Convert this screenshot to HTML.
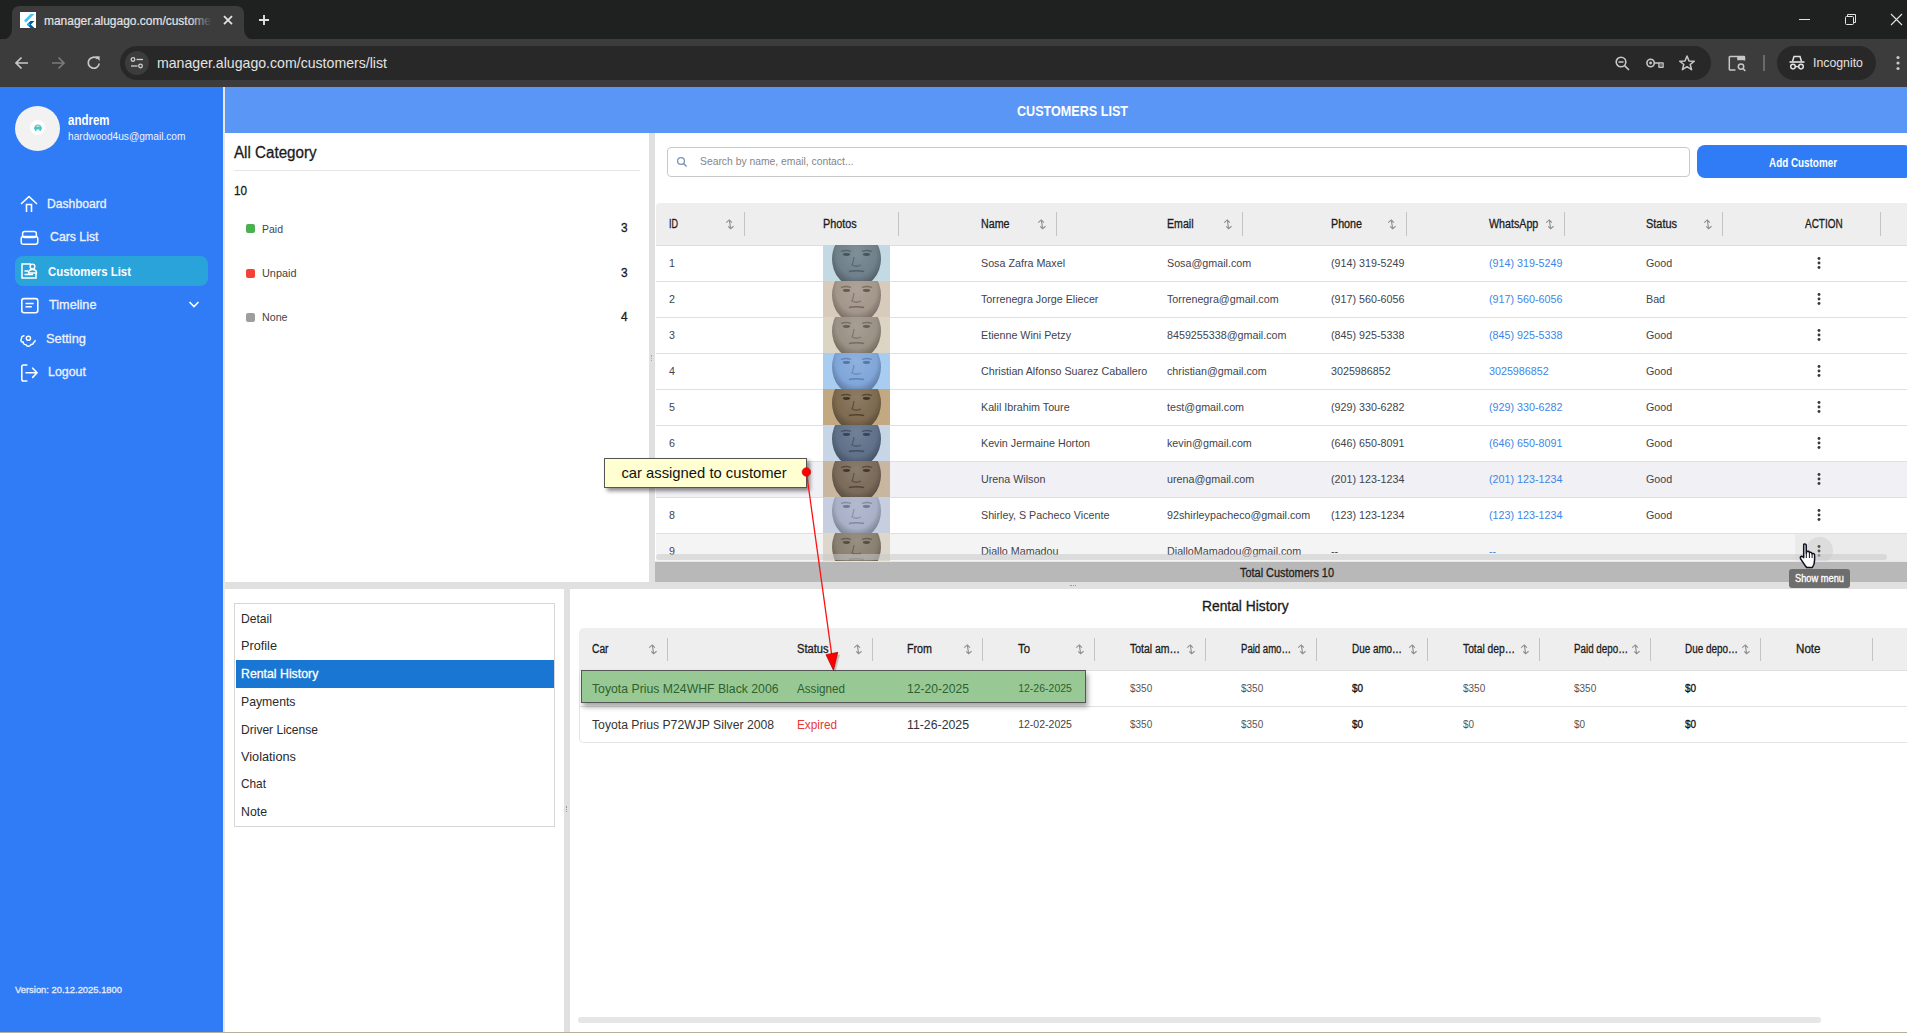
<!DOCTYPE html><html><head><meta charset="utf-8"><style>html,body{margin:0;padding:0;width:1907px;height:1033px;overflow:hidden;background:#fff;font-family:"Liberation Sans",sans-serif;position:relative}</style></head><body>
<div style="position:absolute;left:0px;top:0px;width:1907px;height:40px;background:#1f2020;"></div>
<div style="position:absolute;left:0px;top:39px;width:1907px;height:48px;background:#3c3c3c;"></div>
<svg style="position:absolute;left:0;top:0" width="260" height="40"><path d="M0 40 Q12 40 12 28 L12 14 Q12 6 20 6 L236 6 Q244 6 244 14 L244 28 Q244 40 256 40 Z" fill="#3c3c3c"/></svg>
<div style="position:absolute;left:20px;top:12px;width:16px;height:16px;background:#fff;"></div>
<svg style="position:absolute;left:20px;top:12px" width="16" height="16"><path d="M10.5 2 L4 8.5 L6 10.5 L14.5 2 Z" fill="#47c5fb"/><path d="M10.5 9 L6.8 12.5 L10.5 16 L14.5 16 L10.8 12.5 L14.5 9 Z" fill="#00569e"/><path d="M6.8 12.5 L8.6 10.7 L10.5 12.5 L8.6 14.3Z" fill="#00b5f8"/></svg>
<div style="position:absolute;left:44.00px;top:14px;font-size:13px;line-height:13px;font-weight:400;color:#e3e3e3;white-space:pre;transform:scaleX(0.9204);transform-origin:0 0;-webkit-text-stroke:0.2px #e3e3e3;">manager.alugago.com/custome</div>
<div style="position:absolute;left:190px;top:10px;width:22px;height:20px;background:linear-gradient(90deg,rgba(60,60,60,0),#3c3c3c)"></div>
<svg style="position:absolute;left:222px;top:14px" width="12" height="12"><path d="M2 2.2 L10 10.2 M10 2.2 L2 10.2" stroke="#e3e3e3" stroke-width="1.8"/></svg>
<svg style="position:absolute;left:257px;top:13px" width="14" height="14"><path d="M7 2 V12 M2 7 H12" stroke="#e3e3e3" stroke-width="1.9"/></svg>
<svg style="position:absolute;left:1798px;top:14px" width="14" height="12"><path d="M1 5.5 H12" stroke="#e3e3e3" stroke-width="1"/></svg>
<svg style="position:absolute;left:1844px;top:13px" width="14" height="14"><path d="M3.5 3.5 V1.5 H11.5 V9.5 H9.5" fill="none" stroke="#e3e3e3" stroke-width="1"/><rect x="1.5" y="3.5" width="8" height="8" rx="1" fill="none" stroke="#e3e3e3" stroke-width="1"/></svg>
<svg style="position:absolute;left:1890px;top:13px" width="14" height="14"><path d="M1 1 L12 12 M12 1 L1 12" stroke="#e3e3e3" stroke-width="1.1"/></svg>
<svg style="position:absolute;left:13px;top:54px" width="18" height="18"><path d="M15 9 H3 M8.5 3.5 L3 9 L8.5 14.5" fill="none" stroke="#c7c7c7" stroke-width="1.7"/></svg>
<svg style="position:absolute;left:49px;top:54px" width="18" height="18"><path d="M3 9 H15 M9.5 3.5 L15 9 L9.5 14.5" fill="none" stroke="#7a7a7a" stroke-width="1.7"/></svg>
<svg style="position:absolute;left:85px;top:54px" width="18" height="18"><path d="M14.2 9.5 A5.5 5.5 0 1 1 12.4 4.6" fill="none" stroke="#c7c7c7" stroke-width="1.7"/><path d="M10 2.3 L14.6 2.3 L14.6 6.9 Z" fill="#c7c7c7"/></svg>
<div style="position:absolute;left:120px;top:46px;width:1591px;height:34px;background:#282828;border-radius:17px;"></div>
<div style="position:absolute;left:125px;top:51px;width:24px;height:24px;background:#3c3c3c;border-radius:12px;"></div>
<svg style="position:absolute;left:129px;top:55px" width="16" height="16"><circle cx="4" cy="4.5" r="1.8" fill="none" stroke="#d0d0d0" stroke-width="1.3"/><path d="M7.5 4.5 H14" stroke="#d0d0d0" stroke-width="1.3"/><circle cx="11.5" cy="11" r="1.8" fill="none" stroke="#d0d0d0" stroke-width="1.3"/><path d="M2 11 H8.5" stroke="#d0d0d0" stroke-width="1.3"/></svg>
<div style="position:absolute;left:157.00px;top:55px;font-size:15px;line-height:15px;font-weight:400;color:#e3e3e3;white-space:pre;transform:scaleX(0.9413);transform-origin:0 0;">manager.alugago.com/customers/list</div>
<svg style="position:absolute;left:1614px;top:55px" width="18" height="18"><circle cx="7" cy="7" r="4.8" fill="none" stroke="#c7c7c7" stroke-width="1.6"/><path d="M4.5 7 H9.5 M10.6 10.6 L15 15" stroke="#c7c7c7" stroke-width="1.6"/></svg>
<svg style="position:absolute;left:1645px;top:54px" width="20" height="18"><circle cx="5.6" cy="9" r="3.7" fill="none" stroke="#c7c7c7" stroke-width="1.6"/><circle cx="5.6" cy="9" r="1.4" fill="#c7c7c7"/><path d="M9.3 9 H18 V13.3 H14 V9" fill="none" stroke="#c7c7c7" stroke-width="1.5" stroke-linejoin="round"/><rect x="14.6" y="9.6" width="2.8" height="3" fill="#6a6a6a"/></svg>
<svg style="position:absolute;left:1678px;top:54px" width="18" height="18"><path d="M9 2 L11 7 L16.3 7.2 L12.2 10.5 L13.6 15.7 L9 12.7 L4.4 15.7 L5.8 10.5 L1.7 7.2 L7 7 Z" fill="none" stroke="#c7c7c7" stroke-width="1.5" stroke-linejoin="round"/></svg>
<svg style="position:absolute;left:1727px;top:54px" width="21" height="19"><path d="M8.5 16 H3 Q2.3 16 2.3 15.3 V3.3 Q2.3 2.6 3 2.6 H16.8 Q17.5 2.6 17.5 3.3 V6.5" fill="none" stroke="#c7c7c7" stroke-width="1.5"/><rect x="10.2" y="2.6" width="7.3" height="3.6" fill="#c7c7c7"/><circle cx="14" cy="12.6" r="2.7" fill="none" stroke="#c7c7c7" stroke-width="1.5"/><path d="M15.9 14.5 L18.3 16.9" stroke="#c7c7c7" stroke-width="1.6"/></svg>
<div style="position:absolute;left:1763px;top:55px;width:2px;height:16px;background:#6a6a6a;"></div>
<div style="position:absolute;left:1777px;top:46px;width:99px;height:34px;background:#282828;border-radius:17px;"></div>
<svg style="position:absolute;left:1788px;top:54px" width="18" height="18"><path d="M4.5 7.5 L6 2.5 H12 L13.5 7.5" fill="none" stroke="#e3e3e3" stroke-width="1.5"/><path d="M1.5 8 H16.5" stroke="#e3e3e3" stroke-width="1.6"/><circle cx="5" cy="12.6" r="2.3" fill="none" stroke="#e3e3e3" stroke-width="1.5"/><circle cx="13" cy="12.6" r="2.3" fill="none" stroke="#e3e3e3" stroke-width="1.5"/><path d="M7.3 12.6 H10.7" stroke="#e3e3e3" stroke-width="1.4"/></svg>
<div style="position:absolute;left:1813.00px;top:56px;font-size:13.5px;line-height:13.5px;font-weight:400;color:#e3e3e3;white-space:pre;transform:scaleX(0.9119);transform-origin:0 0;">Incognito</div>
<svg style="position:absolute;left:1894px;top:54px" width="8" height="18"><circle cx="4" cy="3.5" r="1.6" fill="#c7c7c7"/><circle cx="4" cy="9" r="1.6" fill="#c7c7c7"/><circle cx="4" cy="14.5" r="1.6" fill="#c7c7c7"/></svg>
<div style="position:absolute;left:0px;top:87px;width:223px;height:946px;background:#2f7cf6;"></div>
<div style="position:absolute;left:223px;top:87px;width:2px;height:946px;background:#e9e6e2;"></div>
<div style="position:absolute;left:15px;top:106px;width:45px;height:45px;background:#f2f2f2;border-radius:50%;"></div>
<div style="position:absolute;left:30px;top:120px;width:15px;height:15px;background:#ffffff;border-radius:50%;"></div>
<svg style="position:absolute;left:33px;top:124px" width="10" height="8"><path d="M2.2 3 Q2.6 1 5 1 Q7.4 1 7.8 3 Z" fill="none" stroke="#4ec5c0" stroke-width="1.1"/><rect x="1" y="3" width="8" height="2.6" rx="1" fill="#4ec5c0"/><circle cx="2.8" cy="6" r="1.05" fill="#4ec5c0"/><circle cx="7.2" cy="6" r="1.05" fill="#4ec5c0"/></svg>
<div style="position:absolute;left:67.50px;top:113px;font-size:14px;line-height:14px;font-weight:700;color:#ffffff;white-space:pre;transform:scaleX(0.8208);transform-origin:0 0;">andrem</div>
<div style="position:absolute;left:67.50px;top:131px;font-size:11px;line-height:11px;font-weight:400;color:#eef3ff;white-space:pre;transform:scaleX(0.9224);transform-origin:0 0;font-weight:500;">hardwood4us@gmail.com</div>
<div style="position:absolute;left:15px;top:256px;width:193px;height:30px;background:#29a3da;border-radius:8px;"></div>
<svg style="position:absolute;left:19px;top:194px" width="20" height="20"><path d="M2 10 L10 2.5 L18 10" fill="none" stroke="#ffffff" stroke-width="1.6" stroke-linejoin="round"/><path d="M7.5 18 V10.5 H12.5 V18" fill="none" stroke="#ffffff" stroke-width="1.6"/></svg>
<div style="position:absolute;left:47.30px;top:197px;font-size:13px;line-height:13px;font-weight:400;color:#eef2fd;white-space:pre;transform:scaleX(0.9352);transform-origin:0 0;-webkit-text-stroke:0.3px #eef2fd;">Dashboard</div>
<svg style="position:absolute;left:20px;top:230px" width="20" height="16"><rect x="2.6" y="1.5" width="13.8" height="6" rx="2.2" fill="none" stroke="#ffffff" stroke-width="1.5"/><rect x="1.2" y="6.5" width="16.6" height="7.8" rx="2.2" fill="none" stroke="#ffffff" stroke-width="1.5"/></svg>
<div style="position:absolute;left:49.70px;top:230px;font-size:13px;line-height:13px;font-weight:400;color:#eef2fd;white-space:pre;transform:scaleX(0.9455);transform-origin:0 0;-webkit-text-stroke:0.3px #eef2fd;">Cars List</div>
<svg style="position:absolute;left:20px;top:262px" width="18" height="18"><path d="M11 2 H2 V16 H16 V11" fill="none" stroke="#ffffff" stroke-width="1.5"/><circle cx="12.5" cy="4.5" r="2.4" fill="none" stroke="#ffffff" stroke-width="1.4"/><path d="M8.5 11 Q8.5 7.5 12.5 7.5 Q16.5 7.5 16.5 11 Z" fill="none" stroke="#ffffff" stroke-width="1.4"/><path d="M4.5 9 H8 M4.5 12.5 H13" stroke="#ffffff" stroke-width="1.4"/></svg>
<div style="position:absolute;left:47.90px;top:265px;font-size:13px;line-height:13px;font-weight:700;color:#ffffff;white-space:pre;transform:scaleX(0.8770);transform-origin:0 0;">Customers List</div>
<svg style="position:absolute;left:20px;top:297px" width="20" height="18"><rect x="1.8" y="1.6" width="16" height="14.2" rx="2.2" fill="none" stroke="#ffffff" stroke-width="1.6"/><path d="M5.5 6.5 H13.7 M5.5 9.7 H11.8" stroke="#ffffff" stroke-width="1.6"/></svg>
<div style="position:absolute;left:49.10px;top:298px;font-size:13px;line-height:13px;font-weight:400;color:#eef2fd;white-space:pre;transform:scaleX(0.9762);transform-origin:0 0;-webkit-text-stroke:0.3px #eef2fd;">Timeline</div>
<svg style="position:absolute;left:188px;top:300px" width="12" height="9"><path d="M1.5 2 L6 6.5 L10.5 2" fill="none" stroke="#ffffff" stroke-width="1.6"/></svg>
<svg style="position:absolute;left:19px;top:333px" width="18" height="16"><circle cx="9.4" cy="5.3" r="2.1" fill="none" stroke="#ffffff" stroke-width="1.4"/><path d="M5 2.8 Q2 3.3 2.6 5.6 Q1.2 7 2.2 8.4 Q3.2 9.3 4.3 9 Q4.3 11.8 6.8 11.6 Q7.8 13.4 9.6 13.2 Q11.3 13.2 12 11.5 Q14.3 11.7 14.6 9.4 Q16.2 9.2 16.1 7.5" fill="none" stroke="#ffffff" stroke-width="1.4" stroke-linecap="round" stroke-linejoin="round"/></svg>
<div style="position:absolute;left:46.40px;top:332px;font-size:13px;line-height:13px;font-weight:400;color:#eef2fd;white-space:pre;transform:scaleX(0.9880);transform-origin:0 0;-webkit-text-stroke:0.3px #eef2fd;">Setting</div>
<svg style="position:absolute;left:20px;top:363px" width="20" height="20"><path d="M7.4 2 H3.6 Q1.8 2 1.8 3.8 V16.2 Q1.8 18 3.6 18 H7.4" fill="none" stroke="#ffffff" stroke-width="1.6"/><path d="M6 9.8 H16.6 M12.7 5.2 L17.1 9.8 L12.7 14.4" fill="none" stroke="#ffffff" stroke-width="1.6" stroke-linecap="round" stroke-linejoin="round"/></svg>
<div style="position:absolute;left:48.20px;top:365px;font-size:13px;line-height:13px;font-weight:400;color:#eef2fd;white-space:pre;transform:scaleX(0.9552);transform-origin:0 0;-webkit-text-stroke:0.3px #eef2fd;">Logout</div>
<div style="position:absolute;left:14.80px;top:985px;font-size:9.5px;line-height:9.5px;font-weight:400;color:#e6ecff;white-space:pre;transform:scaleX(0.9885);transform-origin:0 0;-webkit-text-stroke:0.3px #e6ecff;">Version: 20.12.2025.1800</div>
<div style="position:absolute;left:225px;top:87px;width:1682px;height:46px;background:#5a96f5;"></div>
<div style="position:absolute;left:1017.00px;top:104px;font-size:14px;line-height:14px;font-weight:700;color:#ffffff;white-space:pre;transform:scaleX(0.8994);transform-origin:0 0;">CUSTOMERS LIST</div>
<div style="position:absolute;left:234.30px;top:145px;font-size:16px;line-height:16px;font-weight:400;color:#1a1a1a;white-space:pre;transform:scaleX(0.9470);transform-origin:0 0;-webkit-text-stroke:0.3px #1a1a1a;">All Category</div>
<div style="position:absolute;left:234px;top:170px;width:406px;height:1px;background:#e6e6e6;"></div>
<div style="position:absolute;left:234.30px;top:185px;font-size:12.5px;line-height:12.5px;font-weight:400;color:#1a1a1a;white-space:pre;transform:scaleX(0.9348);transform-origin:0 0;-webkit-text-stroke:0.3px #1a1a1a;">10</div>
<div style="position:absolute;left:246px;top:224px;width:9px;height:9px;background:#4caf50;border-radius:2px;"></div>
<div style="position:absolute;left:261.50px;top:224px;font-size:11px;line-height:11px;font-weight:400;color:#444444;white-space:pre;transform:scaleX(0.9532);transform-origin:0 0;">Paid</div>
<div style="position:absolute;left:620.89px;top:222px;font-size:12.5px;line-height:12.5px;font-weight:400;color:#1a1a1a;white-space:pre;transform:scaleX(0.9500);transform-origin:0 0;-webkit-text-stroke:0.3px #1a1a1a;">3</div>
<div style="position:absolute;left:246px;top:269px;width:9px;height:9px;background:#f44336;border-radius:2px;"></div>
<div style="position:absolute;left:261.50px;top:268px;font-size:11px;line-height:11px;font-weight:400;color:#444444;white-space:pre;transform:scaleX(0.9892);transform-origin:0 0;">Unpaid</div>
<div style="position:absolute;left:620.89px;top:267px;font-size:12.5px;line-height:12.5px;font-weight:400;color:#1a1a1a;white-space:pre;transform:scaleX(0.9500);transform-origin:0 0;-webkit-text-stroke:0.3px #1a1a1a;">3</div>
<div style="position:absolute;left:246px;top:313px;width:9px;height:9px;background:#9e9e9e;border-radius:2px;"></div>
<div style="position:absolute;left:261.50px;top:312px;font-size:11px;line-height:11px;font-weight:400;color:#444444;white-space:pre;transform:scaleX(0.9691);transform-origin:0 0;">None</div>
<div style="position:absolute;left:620.89px;top:311px;font-size:12.5px;line-height:12.5px;font-weight:400;color:#1a1a1a;white-space:pre;transform:scaleX(0.9500);transform-origin:0 0;-webkit-text-stroke:0.3px #1a1a1a;">4</div>
<div style="position:absolute;left:649px;top:133px;width:6px;height:450px;background:#e0e0e0;"></div>
<div style="position:absolute;left:651px;top:355px;width:2px;height:6px;border-left:1px dotted #aaa"></div>
<div style="position:absolute;left:667px;top:147px;width:1023px;height:30px;background:#ffffff;border:1px solid #c9c9c9;border-radius:4px;box-sizing:border-box;"></div>
<svg style="position:absolute;left:676px;top:156px" width="12" height="12"><circle cx="5" cy="5" r="3.4" fill="none" stroke="#7890b4" stroke-width="1.25"/><path d="M7.5 7.5 L10.6 10.6" stroke="#7890b4" stroke-width="1.4"/></svg>
<div style="position:absolute;left:700.30px;top:156px;font-size:10.5px;line-height:10.5px;font-weight:400;color:#858585;white-space:pre;transform:scaleX(0.9851);transform-origin:0 0;">Search by name, email, contact...</div>
<div style="position:absolute;left:1697px;top:145px;width:215px;height:33px;background:#2f7cf6;border-radius:8px;"></div>
<div style="position:absolute;left:1768.50px;top:157px;font-size:12px;line-height:12px;font-weight:700;color:#ffffff;white-space:pre;transform:scaleX(0.8225);transform-origin:0 0;">Add Customer</div>
<div style="position:absolute;left:656px;top:203px;width:1251px;height:42px;background:#eeeeee;border-top-left-radius:4px;"></div>
<div style="position:absolute;left:656px;top:245px;width:1251px;height:1px;background:#dcdce4;"></div>
<div style="position:absolute;left:668.50px;top:218px;font-size:12px;line-height:12px;font-weight:400;color:#1c1c1c;white-space:pre;transform:scaleX(0.7500);transform-origin:0 0;-webkit-text-stroke:0.3px #1c1c1c;">ID</div>
<svg style="position:absolute;left:725px;top:219px" width="10" height="11"><path d="M1.2 3.6 L4.3 0.9 L6.9 3.6 M3.2 7.3 L5.6 9.7 L8.6 7.3 M4.3 1.2 L5.6 9.4" fill="none" stroke="#8f8f8f" stroke-width="1.1"/></svg>
<div style="position:absolute;left:743.5px;top:212px;width:1.7px;height:24px;background:#c4c4c4;"></div>
<div style="position:absolute;left:822.90px;top:218px;font-size:12px;line-height:12px;font-weight:400;color:#1c1c1c;white-space:pre;transform:scaleX(0.9024);transform-origin:0 0;-webkit-text-stroke:0.3px #1c1c1c;">Photos</div>
<div style="position:absolute;left:897.5px;top:212px;width:1.7px;height:24px;background:#c4c4c4;"></div>
<div style="position:absolute;left:981.00px;top:218px;font-size:12px;line-height:12px;font-weight:400;color:#1c1c1c;white-space:pre;transform:scaleX(0.8902);transform-origin:0 0;-webkit-text-stroke:0.3px #1c1c1c;">Name</div>
<svg style="position:absolute;left:1037px;top:219px" width="10" height="11"><path d="M1.2 3.6 L4.3 0.9 L6.9 3.6 M3.2 7.3 L5.6 9.7 L8.6 7.3 M4.3 1.2 L5.6 9.4" fill="none" stroke="#8f8f8f" stroke-width="1.1"/></svg>
<div style="position:absolute;left:1055.5px;top:212px;width:1.7px;height:24px;background:#c4c4c4;"></div>
<div style="position:absolute;left:1166.70px;top:218px;font-size:12px;line-height:12px;font-weight:400;color:#1c1c1c;white-space:pre;transform:scaleX(0.8829);transform-origin:0 0;-webkit-text-stroke:0.3px #1c1c1c;">Email</div>
<svg style="position:absolute;left:1223px;top:219px" width="10" height="11"><path d="M1.2 3.6 L4.3 0.9 L6.9 3.6 M3.2 7.3 L5.6 9.7 L8.6 7.3 M4.3 1.2 L5.6 9.4" fill="none" stroke="#8f8f8f" stroke-width="1.1"/></svg>
<div style="position:absolute;left:1241.5px;top:212px;width:1.7px;height:24px;background:#c4c4c4;"></div>
<div style="position:absolute;left:1330.50px;top:218px;font-size:12px;line-height:12px;font-weight:400;color:#1c1c1c;white-space:pre;transform:scaleX(0.8937);transform-origin:0 0;-webkit-text-stroke:0.3px #1c1c1c;">Phone</div>
<svg style="position:absolute;left:1387px;top:219px" width="10" height="11"><path d="M1.2 3.6 L4.3 0.9 L6.9 3.6 M3.2 7.3 L5.6 9.7 L8.6 7.3 M4.3 1.2 L5.6 9.4" fill="none" stroke="#8f8f8f" stroke-width="1.1"/></svg>
<div style="position:absolute;left:1405.5px;top:212px;width:1.7px;height:24px;background:#c4c4c4;"></div>
<div style="position:absolute;left:1488.60px;top:218px;font-size:12px;line-height:12px;font-weight:400;color:#1c1c1c;white-space:pre;transform:scaleX(0.8908);transform-origin:0 0;-webkit-text-stroke:0.3px #1c1c1c;">WhatsApp</div>
<svg style="position:absolute;left:1545px;top:219px" width="10" height="11"><path d="M1.2 3.6 L4.3 0.9 L6.9 3.6 M3.2 7.3 L5.6 9.7 L8.6 7.3 M4.3 1.2 L5.6 9.4" fill="none" stroke="#8f8f8f" stroke-width="1.1"/></svg>
<div style="position:absolute;left:1563.5px;top:212px;width:1.7px;height:24px;background:#c4c4c4;"></div>
<div style="position:absolute;left:1646.30px;top:218px;font-size:12px;line-height:12px;font-weight:400;color:#1c1c1c;white-space:pre;transform:scaleX(0.9118);transform-origin:0 0;-webkit-text-stroke:0.3px #1c1c1c;">Status</div>
<svg style="position:absolute;left:1703px;top:219px" width="10" height="11"><path d="M1.2 3.6 L4.3 0.9 L6.9 3.6 M3.2 7.3 L5.6 9.7 L8.6 7.3 M4.3 1.2 L5.6 9.4" fill="none" stroke="#8f8f8f" stroke-width="1.1"/></svg>
<div style="position:absolute;left:1721.5px;top:212px;width:1.7px;height:24px;background:#c4c4c4;"></div>
<div style="position:absolute;left:1804.80px;top:218px;font-size:12px;line-height:12px;font-weight:400;color:#1c1c1c;white-space:pre;transform:scaleX(0.8295);transform-origin:0 0;-webkit-text-stroke:0.3px #1c1c1c;">ACTION</div>
<div style="position:absolute;left:1879.5px;top:212px;width:1.7px;height:24px;background:#c4c4c4;"></div>
<div style="position:absolute;left:656px;top:281px;width:1251px;height:1px;background:#dedee6;"></div>
<svg style="position:absolute;left:823px;top:245px" width="67" height="36" viewBox="0 0 67 36"><defs><radialGradient id="g1" cx="50%" cy="40%" r="55%"><stop offset="0" stop-color="#808f98"/><stop offset="0.75" stop-color="#6f808a"/><stop offset="1" stop-color="#57646c"/></radialGradient></defs><rect width="67" height="36" fill="#c3d9e3"/><ellipse cx="33.5" cy="14" rx="24.5" ry="28" fill="url(#g1)"/><path d="M18 6.5 Q23 4.5 28 6.5 M39 6.5 Q44 4.5 49 6.5" fill="none" stroke="#3c474f" stroke-width="1.3" opacity="0.55"/><ellipse cx="23.5" cy="9.5" rx="3.6" ry="1.4" fill="#3c474f" opacity="0.8"/><ellipse cx="43.5" cy="9.5" rx="3.6" ry="1.4" fill="#3c474f" opacity="0.8"/><path d="M31 12 Q30 18 29 20 Q33.5 22.5 38 20" fill="none" stroke="#3c474f" stroke-width="1.3" opacity="0.45"/><path d="M26 26.5 Q33.5 25 41 26.5" fill="none" stroke="#3c474f" stroke-width="1.6" opacity="0.6"/></svg>
<div style="position:absolute;left:669.00px;top:258px;font-size:11px;line-height:11px;font-weight:400;color:#3f434b;white-space:pre;transform:scaleX(0.9750);transform-origin:0 0;">1</div>
<div style="position:absolute;left:981.00px;top:258px;font-size:11px;line-height:11px;font-weight:400;color:#3f434b;white-space:pre;transform:scaleX(0.9750);transform-origin:0 0;">Sosa Zafra Maxel</div>
<div style="position:absolute;left:1166.70px;top:258px;font-size:11px;line-height:11px;font-weight:400;color:#3f434b;white-space:pre;transform:scaleX(0.9750);transform-origin:0 0;">Sosa@gmail.com</div>
<div style="position:absolute;left:1330.50px;top:258px;font-size:11px;line-height:11px;font-weight:400;color:#3f434b;white-space:pre;transform:scaleX(0.9750);transform-origin:0 0;">(914) 319-5249</div>
<div style="position:absolute;left:1488.60px;top:258px;font-size:11px;line-height:11px;font-weight:400;color:#3d86e8;white-space:pre;transform:scaleX(0.9750);transform-origin:0 0;">(914) 319-5249</div>
<div style="position:absolute;left:1646.30px;top:258px;font-size:11px;line-height:11px;font-weight:400;color:#3f434b;white-space:pre;transform:scaleX(0.9750);transform-origin:0 0;">Good</div>
<svg style="position:absolute;left:1816px;top:255px" width="6" height="16"><circle cx="3" cy="3.5" r="1.45" fill="#3a3a3a"/><circle cx="3" cy="8" r="1.45" fill="#3a3a3a"/><circle cx="3" cy="12.5" r="1.45" fill="#3a3a3a"/></svg>
<div style="position:absolute;left:656px;top:317px;width:1251px;height:1px;background:#dedee6;"></div>
<svg style="position:absolute;left:823px;top:281px" width="67" height="36" viewBox="0 0 67 36"><defs><radialGradient id="g2" cx="50%" cy="40%" r="55%"><stop offset="0" stop-color="#aea398"/><stop offset="0.75" stop-color="#a3968a"/><stop offset="1" stop-color="#7f756c"/></radialGradient></defs><rect width="67" height="36" fill="#d9cbbb"/><ellipse cx="33.5" cy="14" rx="24.5" ry="28" fill="url(#g2)"/><path d="M18 6.5 Q23 4.5 28 6.5 M39 6.5 Q44 4.5 49 6.5" fill="none" stroke="#544a42" stroke-width="1.3" opacity="0.55"/><ellipse cx="23.5" cy="9.5" rx="3.6" ry="1.4" fill="#544a42" opacity="0.8"/><ellipse cx="43.5" cy="9.5" rx="3.6" ry="1.4" fill="#544a42" opacity="0.8"/><path d="M31 12 Q30 18 29 20 Q33.5 22.5 38 20" fill="none" stroke="#544a42" stroke-width="1.3" opacity="0.45"/><path d="M26 26.5 Q33.5 25 41 26.5" fill="none" stroke="#544a42" stroke-width="1.6" opacity="0.6"/></svg>
<div style="position:absolute;left:669.00px;top:294px;font-size:11px;line-height:11px;font-weight:400;color:#3f434b;white-space:pre;transform:scaleX(0.9750);transform-origin:0 0;">2</div>
<div style="position:absolute;left:981.00px;top:294px;font-size:11px;line-height:11px;font-weight:400;color:#3f434b;white-space:pre;transform:scaleX(0.9750);transform-origin:0 0;">Torrenegra Jorge Eliecer</div>
<div style="position:absolute;left:1166.70px;top:294px;font-size:11px;line-height:11px;font-weight:400;color:#3f434b;white-space:pre;transform:scaleX(0.9750);transform-origin:0 0;">Torrenegra@gmail.com</div>
<div style="position:absolute;left:1330.50px;top:294px;font-size:11px;line-height:11px;font-weight:400;color:#3f434b;white-space:pre;transform:scaleX(0.9750);transform-origin:0 0;">(917) 560-6056</div>
<div style="position:absolute;left:1488.60px;top:294px;font-size:11px;line-height:11px;font-weight:400;color:#3d86e8;white-space:pre;transform:scaleX(0.9750);transform-origin:0 0;">(917) 560-6056</div>
<div style="position:absolute;left:1646.30px;top:294px;font-size:11px;line-height:11px;font-weight:400;color:#3f434b;white-space:pre;transform:scaleX(0.9750);transform-origin:0 0;">Bad</div>
<svg style="position:absolute;left:1816px;top:291px" width="6" height="16"><circle cx="3" cy="3.5" r="1.45" fill="#3a3a3a"/><circle cx="3" cy="8" r="1.45" fill="#3a3a3a"/><circle cx="3" cy="12.5" r="1.45" fill="#3a3a3a"/></svg>
<div style="position:absolute;left:656px;top:353px;width:1251px;height:1px;background:#dedee6;"></div>
<svg style="position:absolute;left:823px;top:317px" width="67" height="36" viewBox="0 0 67 36"><defs><radialGradient id="g3" cx="50%" cy="40%" r="55%"><stop offset="0" stop-color="#a69f93"/><stop offset="0.75" stop-color="#9a9284"/><stop offset="1" stop-color="#787267"/></radialGradient></defs><rect width="67" height="36" fill="#ddd5c4"/><ellipse cx="33.5" cy="14" rx="24.5" ry="28" fill="url(#g3)"/><path d="M18 6.5 Q23 4.5 28 6.5 M39 6.5 Q44 4.5 49 6.5" fill="none" stroke="#57514a" stroke-width="1.3" opacity="0.55"/><ellipse cx="23.5" cy="9.5" rx="3.6" ry="1.4" fill="#57514a" opacity="0.8"/><ellipse cx="43.5" cy="9.5" rx="3.6" ry="1.4" fill="#57514a" opacity="0.8"/><path d="M31 12 Q30 18 29 20 Q33.5 22.5 38 20" fill="none" stroke="#57514a" stroke-width="1.3" opacity="0.45"/><path d="M26 26.5 Q33.5 25 41 26.5" fill="none" stroke="#57514a" stroke-width="1.6" opacity="0.6"/></svg>
<div style="position:absolute;left:669.00px;top:330px;font-size:11px;line-height:11px;font-weight:400;color:#3f434b;white-space:pre;transform:scaleX(0.9750);transform-origin:0 0;">3</div>
<div style="position:absolute;left:981.00px;top:330px;font-size:11px;line-height:11px;font-weight:400;color:#3f434b;white-space:pre;transform:scaleX(0.9750);transform-origin:0 0;">Etienne Wini Petzy</div>
<div style="position:absolute;left:1166.70px;top:330px;font-size:11px;line-height:11px;font-weight:400;color:#3f434b;white-space:pre;transform:scaleX(0.9750);transform-origin:0 0;">8459255338@gmail.com</div>
<div style="position:absolute;left:1330.50px;top:330px;font-size:11px;line-height:11px;font-weight:400;color:#3f434b;white-space:pre;transform:scaleX(0.9750);transform-origin:0 0;">(845) 925-5338</div>
<div style="position:absolute;left:1488.60px;top:330px;font-size:11px;line-height:11px;font-weight:400;color:#3d86e8;white-space:pre;transform:scaleX(0.9750);transform-origin:0 0;">(845) 925-5338</div>
<div style="position:absolute;left:1646.30px;top:330px;font-size:11px;line-height:11px;font-weight:400;color:#3f434b;white-space:pre;transform:scaleX(0.9750);transform-origin:0 0;">Good</div>
<svg style="position:absolute;left:1816px;top:327px" width="6" height="16"><circle cx="3" cy="3.5" r="1.45" fill="#3a3a3a"/><circle cx="3" cy="8" r="1.45" fill="#3a3a3a"/><circle cx="3" cy="12.5" r="1.45" fill="#3a3a3a"/></svg>
<div style="position:absolute;left:656px;top:389px;width:1251px;height:1px;background:#dedee6;"></div>
<svg style="position:absolute;left:823px;top:353px" width="67" height="36" viewBox="0 0 67 36"><defs><radialGradient id="g4" cx="50%" cy="40%" r="55%"><stop offset="0" stop-color="#8fb1de"/><stop offset="0.75" stop-color="#80a6d9"/><stop offset="1" stop-color="#6481a9"/></radialGradient></defs><rect width="67" height="36" fill="#a9cdf1"/><ellipse cx="33.5" cy="14" rx="24.5" ry="28" fill="url(#g4)"/><path d="M18 6.5 Q23 4.5 28 6.5 M39 6.5 Q44 4.5 49 6.5" fill="none" stroke="#48689a" stroke-width="1.3" opacity="0.55"/><ellipse cx="23.5" cy="9.5" rx="3.6" ry="1.4" fill="#48689a" opacity="0.8"/><ellipse cx="43.5" cy="9.5" rx="3.6" ry="1.4" fill="#48689a" opacity="0.8"/><path d="M31 12 Q30 18 29 20 Q33.5 22.5 38 20" fill="none" stroke="#48689a" stroke-width="1.3" opacity="0.45"/><path d="M26 26.5 Q33.5 25 41 26.5" fill="none" stroke="#48689a" stroke-width="1.6" opacity="0.6"/></svg>
<div style="position:absolute;left:669.00px;top:366px;font-size:11px;line-height:11px;font-weight:400;color:#3f434b;white-space:pre;transform:scaleX(0.9750);transform-origin:0 0;">4</div>
<div style="position:absolute;left:981.00px;top:366px;font-size:11px;line-height:11px;font-weight:400;color:#3f434b;white-space:pre;transform:scaleX(0.9750);transform-origin:0 0;">Christian Alfonso Suarez Caballero</div>
<div style="position:absolute;left:1166.70px;top:366px;font-size:11px;line-height:11px;font-weight:400;color:#3f434b;white-space:pre;transform:scaleX(0.9750);transform-origin:0 0;">christian@gmail.com</div>
<div style="position:absolute;left:1330.50px;top:366px;font-size:11px;line-height:11px;font-weight:400;color:#3f434b;white-space:pre;transform:scaleX(0.9750);transform-origin:0 0;">3025986852</div>
<div style="position:absolute;left:1488.60px;top:366px;font-size:11px;line-height:11px;font-weight:400;color:#3d86e8;white-space:pre;transform:scaleX(0.9750);transform-origin:0 0;">3025986852</div>
<div style="position:absolute;left:1646.30px;top:366px;font-size:11px;line-height:11px;font-weight:400;color:#3f434b;white-space:pre;transform:scaleX(0.9750);transform-origin:0 0;">Good</div>
<svg style="position:absolute;left:1816px;top:363px" width="6" height="16"><circle cx="3" cy="3.5" r="1.45" fill="#3a3a3a"/><circle cx="3" cy="8" r="1.45" fill="#3a3a3a"/><circle cx="3" cy="12.5" r="1.45" fill="#3a3a3a"/></svg>
<div style="position:absolute;left:656px;top:425px;width:1251px;height:1px;background:#dedee6;"></div>
<svg style="position:absolute;left:823px;top:389px" width="67" height="36" viewBox="0 0 67 36"><defs><radialGradient id="g5" cx="50%" cy="40%" r="55%"><stop offset="0" stop-color="#8d7c65"/><stop offset="0.75" stop-color="#7e6a50"/><stop offset="1" stop-color="#62533e"/></radialGradient></defs><rect width="67" height="36" fill="#c2a982"/><ellipse cx="33.5" cy="14" rx="24.5" ry="28" fill="url(#g5)"/><path d="M18 6.5 Q23 4.5 28 6.5 M39 6.5 Q44 4.5 49 6.5" fill="none" stroke="#2f261c" stroke-width="1.3" opacity="0.55"/><ellipse cx="23.5" cy="9.5" rx="3.6" ry="1.4" fill="#2f261c" opacity="0.8"/><ellipse cx="43.5" cy="9.5" rx="3.6" ry="1.4" fill="#2f261c" opacity="0.8"/><path d="M31 12 Q30 18 29 20 Q33.5 22.5 38 20" fill="none" stroke="#2f261c" stroke-width="1.3" opacity="0.45"/><path d="M26 26.5 Q33.5 25 41 26.5" fill="none" stroke="#2f261c" stroke-width="1.6" opacity="0.6"/></svg>
<div style="position:absolute;left:669.00px;top:402px;font-size:11px;line-height:11px;font-weight:400;color:#3f434b;white-space:pre;transform:scaleX(0.9750);transform-origin:0 0;">5</div>
<div style="position:absolute;left:981.00px;top:402px;font-size:11px;line-height:11px;font-weight:400;color:#3f434b;white-space:pre;transform:scaleX(0.9750);transform-origin:0 0;">Kalil Ibrahim Toure</div>
<div style="position:absolute;left:1166.70px;top:402px;font-size:11px;line-height:11px;font-weight:400;color:#3f434b;white-space:pre;transform:scaleX(0.9750);transform-origin:0 0;">test@gmail.com</div>
<div style="position:absolute;left:1330.50px;top:402px;font-size:11px;line-height:11px;font-weight:400;color:#3f434b;white-space:pre;transform:scaleX(0.9750);transform-origin:0 0;">(929) 330-6282</div>
<div style="position:absolute;left:1488.60px;top:402px;font-size:11px;line-height:11px;font-weight:400;color:#3d86e8;white-space:pre;transform:scaleX(0.9750);transform-origin:0 0;">(929) 330-6282</div>
<div style="position:absolute;left:1646.30px;top:402px;font-size:11px;line-height:11px;font-weight:400;color:#3f434b;white-space:pre;transform:scaleX(0.9750);transform-origin:0 0;">Good</div>
<svg style="position:absolute;left:1816px;top:399px" width="6" height="16"><circle cx="3" cy="3.5" r="1.45" fill="#3a3a3a"/><circle cx="3" cy="8" r="1.45" fill="#3a3a3a"/><circle cx="3" cy="12.5" r="1.45" fill="#3a3a3a"/></svg>
<div style="position:absolute;left:656px;top:461px;width:1251px;height:1px;background:#dedee6;"></div>
<svg style="position:absolute;left:823px;top:425px" width="67" height="36" viewBox="0 0 67 36"><defs><radialGradient id="g6" cx="50%" cy="40%" r="55%"><stop offset="0" stop-color="#728197"/><stop offset="0.75" stop-color="#5f7089"/><stop offset="1" stop-color="#4a576b"/></radialGradient></defs><rect width="67" height="36" fill="#c6d6e6"/><ellipse cx="33.5" cy="14" rx="24.5" ry="28" fill="url(#g6)"/><path d="M18 6.5 Q23 4.5 28 6.5 M39 6.5 Q44 4.5 49 6.5" fill="none" stroke="#2c3646" stroke-width="1.3" opacity="0.55"/><ellipse cx="23.5" cy="9.5" rx="3.6" ry="1.4" fill="#2c3646" opacity="0.8"/><ellipse cx="43.5" cy="9.5" rx="3.6" ry="1.4" fill="#2c3646" opacity="0.8"/><path d="M31 12 Q30 18 29 20 Q33.5 22.5 38 20" fill="none" stroke="#2c3646" stroke-width="1.3" opacity="0.45"/><path d="M26 26.5 Q33.5 25 41 26.5" fill="none" stroke="#2c3646" stroke-width="1.6" opacity="0.6"/></svg>
<div style="position:absolute;left:669.00px;top:438px;font-size:11px;line-height:11px;font-weight:400;color:#3f434b;white-space:pre;transform:scaleX(0.9750);transform-origin:0 0;">6</div>
<div style="position:absolute;left:981.00px;top:438px;font-size:11px;line-height:11px;font-weight:400;color:#3f434b;white-space:pre;transform:scaleX(0.9750);transform-origin:0 0;">Kevin Jermaine Horton</div>
<div style="position:absolute;left:1166.70px;top:438px;font-size:11px;line-height:11px;font-weight:400;color:#3f434b;white-space:pre;transform:scaleX(0.9750);transform-origin:0 0;">kevin@gmail.com</div>
<div style="position:absolute;left:1330.50px;top:438px;font-size:11px;line-height:11px;font-weight:400;color:#3f434b;white-space:pre;transform:scaleX(0.9750);transform-origin:0 0;">(646) 650-8091</div>
<div style="position:absolute;left:1488.60px;top:438px;font-size:11px;line-height:11px;font-weight:400;color:#3d86e8;white-space:pre;transform:scaleX(0.9750);transform-origin:0 0;">(646) 650-8091</div>
<div style="position:absolute;left:1646.30px;top:438px;font-size:11px;line-height:11px;font-weight:400;color:#3f434b;white-space:pre;transform:scaleX(0.9750);transform-origin:0 0;">Good</div>
<svg style="position:absolute;left:1816px;top:435px" width="6" height="16"><circle cx="3" cy="3.5" r="1.45" fill="#3a3a3a"/><circle cx="3" cy="8" r="1.45" fill="#3a3a3a"/><circle cx="3" cy="12.5" r="1.45" fill="#3a3a3a"/></svg>
<div style="position:absolute;left:656px;top:462px;width:1251px;height:35px;background:#f0f0f5;"></div>
<div style="position:absolute;left:656px;top:497px;width:1251px;height:1px;background:#dedee6;"></div>
<svg style="position:absolute;left:823px;top:461px" width="67" height="36" viewBox="0 0 67 36"><defs><radialGradient id="g7" cx="50%" cy="40%" r="55%"><stop offset="0" stop-color="#8a7c6e"/><stop offset="0.75" stop-color="#7a6a5a"/><stop offset="1" stop-color="#5f5346"/></radialGradient></defs><rect width="67" height="36" fill="#c9b6a0"/><ellipse cx="33.5" cy="14" rx="24.5" ry="28" fill="url(#g7)"/><path d="M18 6.5 Q23 4.5 28 6.5 M39 6.5 Q44 4.5 49 6.5" fill="none" stroke="#35291f" stroke-width="1.3" opacity="0.55"/><ellipse cx="23.5" cy="9.5" rx="3.6" ry="1.4" fill="#35291f" opacity="0.8"/><ellipse cx="43.5" cy="9.5" rx="3.6" ry="1.4" fill="#35291f" opacity="0.8"/><path d="M31 12 Q30 18 29 20 Q33.5 22.5 38 20" fill="none" stroke="#35291f" stroke-width="1.3" opacity="0.45"/><path d="M26 26.5 Q33.5 25 41 26.5" fill="none" stroke="#35291f" stroke-width="1.6" opacity="0.6"/></svg>
<div style="position:absolute;left:669.00px;top:474px;font-size:11px;line-height:11px;font-weight:400;color:#3f434b;white-space:pre;transform:scaleX(0.9750);transform-origin:0 0;">7</div>
<div style="position:absolute;left:981.00px;top:474px;font-size:11px;line-height:11px;font-weight:400;color:#3f434b;white-space:pre;transform:scaleX(0.9750);transform-origin:0 0;">Urena Wilson</div>
<div style="position:absolute;left:1166.70px;top:474px;font-size:11px;line-height:11px;font-weight:400;color:#3f434b;white-space:pre;transform:scaleX(0.9750);transform-origin:0 0;">urena@gmail.com</div>
<div style="position:absolute;left:1330.50px;top:474px;font-size:11px;line-height:11px;font-weight:400;color:#3f434b;white-space:pre;transform:scaleX(0.9750);transform-origin:0 0;">(201) 123-1234</div>
<div style="position:absolute;left:1488.60px;top:474px;font-size:11px;line-height:11px;font-weight:400;color:#3d86e8;white-space:pre;transform:scaleX(0.9750);transform-origin:0 0;">(201) 123-1234</div>
<div style="position:absolute;left:1646.30px;top:474px;font-size:11px;line-height:11px;font-weight:400;color:#3f434b;white-space:pre;transform:scaleX(0.9750);transform-origin:0 0;">Good</div>
<svg style="position:absolute;left:1816px;top:471px" width="6" height="16"><circle cx="3" cy="3.5" r="1.45" fill="#3a3a3a"/><circle cx="3" cy="8" r="1.45" fill="#3a3a3a"/><circle cx="3" cy="12.5" r="1.45" fill="#3a3a3a"/></svg>
<div style="position:absolute;left:656px;top:533px;width:1251px;height:1px;background:#dedee6;"></div>
<svg style="position:absolute;left:823px;top:497px" width="67" height="36" viewBox="0 0 67 36"><defs><radialGradient id="g8" cx="50%" cy="40%" r="55%"><stop offset="0" stop-color="#b3bacf"/><stop offset="0.75" stop-color="#a9b1c8"/><stop offset="1" stop-color="#848a9c"/></radialGradient></defs><rect width="67" height="36" fill="#c6cee0"/><ellipse cx="33.5" cy="14" rx="24.5" ry="28" fill="url(#g8)"/><path d="M18 6.5 Q23 4.5 28 6.5 M39 6.5 Q44 4.5 49 6.5" fill="none" stroke="#656b82" stroke-width="1.3" opacity="0.55"/><ellipse cx="23.5" cy="9.5" rx="3.6" ry="1.4" fill="#656b82" opacity="0.8"/><ellipse cx="43.5" cy="9.5" rx="3.6" ry="1.4" fill="#656b82" opacity="0.8"/><path d="M31 12 Q30 18 29 20 Q33.5 22.5 38 20" fill="none" stroke="#656b82" stroke-width="1.3" opacity="0.45"/><path d="M26 26.5 Q33.5 25 41 26.5" fill="none" stroke="#656b82" stroke-width="1.6" opacity="0.6"/></svg>
<div style="position:absolute;left:669.00px;top:510px;font-size:11px;line-height:11px;font-weight:400;color:#3f434b;white-space:pre;transform:scaleX(0.9750);transform-origin:0 0;">8</div>
<div style="position:absolute;left:981.00px;top:510px;font-size:11px;line-height:11px;font-weight:400;color:#3f434b;white-space:pre;transform:scaleX(0.9750);transform-origin:0 0;">Shirley, S Pacheco Vicente</div>
<div style="position:absolute;left:1166.70px;top:510px;font-size:11px;line-height:11px;font-weight:400;color:#3f434b;white-space:pre;transform:scaleX(0.9750);transform-origin:0 0;">92shirleypacheco@gmail.com</div>
<div style="position:absolute;left:1330.50px;top:510px;font-size:11px;line-height:11px;font-weight:400;color:#3f434b;white-space:pre;transform:scaleX(0.9750);transform-origin:0 0;">(123) 123-1234</div>
<div style="position:absolute;left:1488.60px;top:510px;font-size:11px;line-height:11px;font-weight:400;color:#3d86e8;white-space:pre;transform:scaleX(0.9750);transform-origin:0 0;">(123) 123-1234</div>
<div style="position:absolute;left:1646.30px;top:510px;font-size:11px;line-height:11px;font-weight:400;color:#3f434b;white-space:pre;transform:scaleX(0.9750);transform-origin:0 0;">Good</div>
<svg style="position:absolute;left:1816px;top:507px" width="6" height="16"><circle cx="3" cy="3.5" r="1.45" fill="#3a3a3a"/><circle cx="3" cy="8" r="1.45" fill="#3a3a3a"/><circle cx="3" cy="12.5" r="1.45" fill="#3a3a3a"/></svg>
<div style="position:absolute;left:656px;top:534px;width:1251px;height:27px;background:#f4f4f4;"></div>
<div style="position:absolute;left:1795px;top:534px;width:112px;height:27px;background:#ebebeb;"></div>
<svg style="position:absolute;left:823px;top:533px" width="67" height="28" viewBox="0 0 67 28"><defs><radialGradient id="g9" cx="50%" cy="40%" r="55%"><stop offset="0" stop-color="#988f82"/><stop offset="0.75" stop-color="#8a8071"/><stop offset="1" stop-color="#6c6458"/></radialGradient></defs><rect width="67" height="28" fill="#dcd7ca"/><ellipse cx="33.5" cy="14" rx="24.5" ry="28" fill="url(#g9)"/><path d="M18 6.5 Q23 4.5 28 6.5 M39 6.5 Q44 4.5 49 6.5" fill="none" stroke="#463f36" stroke-width="1.3" opacity="0.55"/><ellipse cx="23.5" cy="9.5" rx="3.6" ry="1.4" fill="#463f36" opacity="0.8"/><ellipse cx="43.5" cy="9.5" rx="3.6" ry="1.4" fill="#463f36" opacity="0.8"/><path d="M31 12 Q30 18 29 20 Q33.5 22.5 38 20" fill="none" stroke="#463f36" stroke-width="1.3" opacity="0.45"/><path d="M26 26.5 Q33.5 25 41 26.5" fill="none" stroke="#463f36" stroke-width="1.6" opacity="0.6"/></svg>
<div style="position:absolute;left:669.00px;top:546px;font-size:11px;line-height:11px;font-weight:400;color:#3f434b;white-space:pre;transform:scaleX(0.9750);transform-origin:0 0;">9</div>
<div style="position:absolute;left:981.00px;top:546px;font-size:11px;line-height:11px;font-weight:400;color:#3f434b;white-space:pre;transform:scaleX(0.9750);transform-origin:0 0;">Diallo Mamadou</div>
<div style="position:absolute;left:1166.70px;top:546px;font-size:11px;line-height:11px;font-weight:400;color:#3f434b;white-space:pre;transform:scaleX(0.9750);transform-origin:0 0;">DialloMamadou@gmail.com</div>
<div style="position:absolute;left:1330.50px;top:546px;font-size:11px;line-height:11px;font-weight:400;color:#3f434b;white-space:pre;transform:scaleX(0.9750);transform-origin:0 0;">--</div>
<div style="position:absolute;left:1488.60px;top:546px;font-size:11px;line-height:11px;font-weight:400;color:#3d86e8;white-space:pre;transform:scaleX(0.9750);transform-origin:0 0;">--</div>
<svg style="position:absolute;left:1816px;top:543px" width="6" height="16"><circle cx="3" cy="3.5" r="1.45" fill="#3a3a3a"/><circle cx="3" cy="8" r="1.45" fill="#3a3a3a"/><circle cx="3" cy="12.5" r="1.45" fill="#3a3a3a"/></svg>
<div style="position:absolute;left:1806px;top:537px;width:27px;height:27px;background:#dcdcdc;border-radius:50%;"></div>
<svg style="position:absolute;left:1816px;top:543px" width="6" height="16"><circle cx="3" cy="3.5" r="1.45" fill="#555"/><circle cx="3" cy="8" r="1.45" fill="#555"/><circle cx="3" cy="12.5" r="1.45" fill="#555"/></svg>
<div style="position:absolute;left:656px;top:554px;width:1231px;height:6px;background:rgba(200,200,200,0.55);border-radius:3px;"></div>
<div style="position:absolute;left:655px;top:561px;width:1252px;height:1px;background:#e6e6e6;"></div>
<div style="position:absolute;left:655px;top:562px;width:1252px;height:20px;background:#b8b8b8;"></div>
<div style="position:absolute;left:1240.00px;top:567px;font-size:12px;line-height:12px;font-weight:400;color:#222222;white-space:pre;transform:scaleX(0.9094);transform-origin:0 0;-webkit-text-stroke:0.3px #222222;">Total Customers 10</div>
<div style="position:absolute;left:225px;top:582px;width:1682px;height:7px;background:#e0e0e0;"></div>
<div style="position:absolute;left:1070px;top:585px;width:6px;height:1px;border-top:1px dotted #999"></div>
<div style="position:absolute;left:1789px;top:569px;width:61px;height:19px;background:#6e6e6e;border-radius:3px;"></div>
<div style="position:absolute;left:1795.00px;top:574px;font-size:10px;line-height:10px;font-weight:400;color:#ffffff;white-space:pre;transform:scaleX(0.9278);transform-origin:0 0;-webkit-text-stroke:0.3px #ffffff;">Show menu</div>
<svg style="position:absolute;left:1799px;top:543px" width="20" height="26" viewBox="0 0 20 26"><path d="M4.8 1.2 Q6.8 0.6 7.2 2.2 L7.3 10.2 L7.8 8.4 Q9.8 7.6 10.3 9.4 L10.5 9.6 Q12.3 8.7 12.9 10.6 L13.2 10.8 Q15 10 15.6 11.8 V17 Q15.6 21.5 13.4 24.4 H7.6 Q6.2 23 4 19.4 L1.5 15.6 Q0.8 13.8 2.6 13.3 Q3.8 13.3 4.7 14.6 V2.2 Z" fill="#fff" stroke="#0f1020" stroke-width="1.5" stroke-linejoin="round"/><path d="M7.3 10.2 V15 M10.4 9.8 V15 M13.1 11 V15" stroke="#0f1020" stroke-width="1"/></svg>
<div style="position:absolute;left:234px;top:603px;width:321px;height:224px;background:#ffffff;border:1.5px solid #d6d6d6;box-sizing:border-box;"></div>
<div style="position:absolute;left:235.5px;top:660px;width:318px;height:27.5px;background:#1976d2;"></div>
<div style="position:absolute;left:240.50px;top:611.5px;font-size:13px;line-height:13px;font-weight:400;color:#2a2a2a;white-space:pre;transform:scaleX(0.9323);transform-origin:0 0;">Detail</div>
<div style="position:absolute;left:240.50px;top:638.5px;font-size:13px;line-height:13px;font-weight:400;color:#2a2a2a;white-space:pre;transform:scaleX(0.9767);transform-origin:0 0;">Profile</div>
<div style="position:absolute;left:240.50px;top:666.5px;font-size:13px;line-height:13px;font-weight:400;color:#ffffff;white-space:pre;transform:scaleX(0.9467);transform-origin:0 0;-webkit-text-stroke:0.3px #ffffff;">Rental History</div>
<div style="position:absolute;left:240.50px;top:694.5px;font-size:13px;line-height:13px;font-weight:400;color:#2a2a2a;white-space:pre;transform:scaleX(0.9427);transform-origin:0 0;">Payments</div>
<div style="position:absolute;left:240.50px;top:722.5px;font-size:13px;line-height:13px;font-weight:400;color:#2a2a2a;white-space:pre;transform:scaleX(0.9265);transform-origin:0 0;">Driver License</div>
<div style="position:absolute;left:240.50px;top:749.5px;font-size:13px;line-height:13px;font-weight:400;color:#2a2a2a;white-space:pre;transform:scaleX(0.9794);transform-origin:0 0;">Violations</div>
<div style="position:absolute;left:240.50px;top:777px;font-size:13px;line-height:13px;font-weight:400;color:#2a2a2a;white-space:pre;transform:scaleX(0.9101);transform-origin:0 0;">Chat</div>
<div style="position:absolute;left:240.50px;top:805px;font-size:13px;line-height:13px;font-weight:400;color:#2a2a2a;white-space:pre;transform:scaleX(0.9465);transform-origin:0 0;">Note</div>
<div style="position:absolute;left:564px;top:589px;width:6px;height:444px;background:#e0e0e0;"></div>
<div style="position:absolute;left:566px;top:806px;width:2px;height:6px;border-left:1px dotted #999"></div>
<div style="position:absolute;left:1201.60px;top:599px;font-size:14px;line-height:14px;font-weight:400;color:#1a1a1a;white-space:pre;transform:scaleX(0.9865);transform-origin:0 0;-webkit-text-stroke:0.3px #1a1a1a;">Rental History</div>
<div style="position:absolute;left:579px;top:628px;width:1328px;height:42.5px;background:#eeeeee;border-top-left-radius:5px;"></div>
<div style="position:absolute;left:579px;top:670px;width:1328px;height:73px;background:#ffffff;border-left:1px solid #e4e4e4;border-bottom:1px solid #e4e4e4;border-bottom-left-radius:5px;box-sizing:border-box;"></div>
<div style="position:absolute;left:579px;top:706px;width:1328px;height:1px;background:#e2e2e2;"></div>
<div style="position:absolute;left:579px;top:670px;width:1328px;height:1px;background:#e0e0e0;"></div>
<div style="position:absolute;left:591.50px;top:643px;font-size:12px;line-height:12px;font-weight:400;color:#1c1c1c;white-space:pre;transform:scaleX(0.8530);transform-origin:0 0;-webkit-text-stroke:0.3px #1c1c1c;">Car</div>
<svg style="position:absolute;left:648px;top:644px" width="10" height="11"><path d="M1.2 3.6 L4.3 0.9 L6.9 3.6 M3.2 7.3 L5.6 9.7 L8.6 7.3 M4.3 1.2 L5.6 9.4" fill="none" stroke="#8f8f8f" stroke-width="1.1"/></svg>
<div style="position:absolute;left:666.5px;top:638px;width:1.7px;height:23px;background:#c4c4c4;"></div>
<div style="position:absolute;left:796.50px;top:643px;font-size:12px;line-height:12px;font-weight:400;color:#1c1c1c;white-space:pre;transform:scaleX(0.9265);transform-origin:0 0;-webkit-text-stroke:0.3px #1c1c1c;">Status</div>
<svg style="position:absolute;left:853px;top:644px" width="10" height="11"><path d="M1.2 3.6 L4.3 0.9 L6.9 3.6 M3.2 7.3 L5.6 9.7 L8.6 7.3 M4.3 1.2 L5.6 9.4" fill="none" stroke="#8f8f8f" stroke-width="1.1"/></svg>
<div style="position:absolute;left:871.5px;top:638px;width:1.7px;height:23px;background:#c4c4c4;"></div>
<div style="position:absolute;left:907.40px;top:643px;font-size:12px;line-height:12px;font-weight:400;color:#1c1c1c;white-space:pre;transform:scaleX(0.8929);transform-origin:0 0;-webkit-text-stroke:0.3px #1c1c1c;">From</div>
<svg style="position:absolute;left:963px;top:644px" width="10" height="11"><path d="M1.2 3.6 L4.3 0.9 L6.9 3.6 M3.2 7.3 L5.6 9.7 L8.6 7.3 M4.3 1.2 L5.6 9.4" fill="none" stroke="#8f8f8f" stroke-width="1.1"/></svg>
<div style="position:absolute;left:981.5px;top:638px;width:1.7px;height:23px;background:#c4c4c4;"></div>
<div style="position:absolute;left:1018.20px;top:643px;font-size:12px;line-height:12px;font-weight:400;color:#1c1c1c;white-space:pre;transform:scaleX(0.9470);transform-origin:0 0;-webkit-text-stroke:0.3px #1c1c1c;">To</div>
<svg style="position:absolute;left:1075px;top:644px" width="10" height="11"><path d="M1.2 3.6 L4.3 0.9 L6.9 3.6 M3.2 7.3 L5.6 9.7 L8.6 7.3 M4.3 1.2 L5.6 9.4" fill="none" stroke="#8f8f8f" stroke-width="1.1"/></svg>
<div style="position:absolute;left:1093.5px;top:638px;width:1.7px;height:23px;background:#c4c4c4;"></div>
<div style="position:absolute;left:1129.60px;top:643px;font-size:12px;line-height:12px;font-weight:400;color:#1c1c1c;white-space:pre;transform:scaleX(0.8719);transform-origin:0 0;-webkit-text-stroke:0.3px #1c1c1c;">Total am…</div>
<svg style="position:absolute;left:1186px;top:644px" width="10" height="11"><path d="M1.2 3.6 L4.3 0.9 L6.9 3.6 M3.2 7.3 L5.6 9.7 L8.6 7.3 M4.3 1.2 L5.6 9.4" fill="none" stroke="#8f8f8f" stroke-width="1.1"/></svg>
<div style="position:absolute;left:1204.5px;top:638px;width:1.7px;height:23px;background:#c4c4c4;"></div>
<div style="position:absolute;left:1240.50px;top:643px;font-size:12px;line-height:12px;font-weight:400;color:#1c1c1c;white-space:pre;transform:scaleX(0.7976);transform-origin:0 0;-webkit-text-stroke:0.3px #1c1c1c;">Paid amo…</div>
<svg style="position:absolute;left:1297px;top:644px" width="10" height="11"><path d="M1.2 3.6 L4.3 0.9 L6.9 3.6 M3.2 7.3 L5.6 9.7 L8.6 7.3 M4.3 1.2 L5.6 9.4" fill="none" stroke="#8f8f8f" stroke-width="1.1"/></svg>
<div style="position:absolute;left:1315.5px;top:638px;width:1.7px;height:23px;background:#c4c4c4;"></div>
<div style="position:absolute;left:1351.80px;top:643px;font-size:12px;line-height:12px;font-weight:400;color:#1c1c1c;white-space:pre;transform:scaleX(0.8239);transform-origin:0 0;-webkit-text-stroke:0.3px #1c1c1c;">Due amo…</div>
<svg style="position:absolute;left:1408px;top:644px" width="10" height="11"><path d="M1.2 3.6 L4.3 0.9 L6.9 3.6 M3.2 7.3 L5.6 9.7 L8.6 7.3 M4.3 1.2 L5.6 9.4" fill="none" stroke="#8f8f8f" stroke-width="1.1"/></svg>
<div style="position:absolute;left:1426.5px;top:638px;width:1.7px;height:23px;background:#c4c4c4;"></div>
<div style="position:absolute;left:1463.00px;top:643px;font-size:12px;line-height:12px;font-weight:400;color:#1c1c1c;white-space:pre;transform:scaleX(0.8568);transform-origin:0 0;-webkit-text-stroke:0.3px #1c1c1c;">Total dep…</div>
<svg style="position:absolute;left:1520px;top:644px" width="10" height="11"><path d="M1.2 3.6 L4.3 0.9 L6.9 3.6 M3.2 7.3 L5.6 9.7 L8.6 7.3 M4.3 1.2 L5.6 9.4" fill="none" stroke="#8f8f8f" stroke-width="1.1"/></svg>
<div style="position:absolute;left:1538.5px;top:638px;width:1.7px;height:23px;background:#c4c4c4;"></div>
<div style="position:absolute;left:1574.00px;top:643px;font-size:12px;line-height:12px;font-weight:400;color:#1c1c1c;white-space:pre;transform:scaleX(0.8178);transform-origin:0 0;-webkit-text-stroke:0.3px #1c1c1c;">Paid depo…</div>
<svg style="position:absolute;left:1631px;top:644px" width="10" height="11"><path d="M1.2 3.6 L4.3 0.9 L6.9 3.6 M3.2 7.3 L5.6 9.7 L8.6 7.3 M4.3 1.2 L5.6 9.4" fill="none" stroke="#8f8f8f" stroke-width="1.1"/></svg>
<div style="position:absolute;left:1649.5px;top:638px;width:1.7px;height:23px;background:#c4c4c4;"></div>
<div style="position:absolute;left:1685.30px;top:643px;font-size:12px;line-height:12px;font-weight:400;color:#1c1c1c;white-space:pre;transform:scaleX(0.8277);transform-origin:0 0;-webkit-text-stroke:0.3px #1c1c1c;">Due depo…</div>
<svg style="position:absolute;left:1741px;top:644px" width="10" height="11"><path d="M1.2 3.6 L4.3 0.9 L6.9 3.6 M3.2 7.3 L5.6 9.7 L8.6 7.3 M4.3 1.2 L5.6 9.4" fill="none" stroke="#8f8f8f" stroke-width="1.1"/></svg>
<div style="position:absolute;left:1759.5px;top:638px;width:1.7px;height:23px;background:#c4c4c4;"></div>
<div style="position:absolute;left:1796.00px;top:643px;font-size:12px;line-height:12px;font-weight:400;color:#1c1c1c;white-space:pre;transform:scaleX(0.9667);transform-origin:0 0;-webkit-text-stroke:0.3px #1c1c1c;">Note</div>
<div style="position:absolute;left:1871.5px;top:638px;width:1.7px;height:23px;background:#c4c4c4;"></div>
<div style="position:absolute;left:581px;top:670px;width:504.5px;height:33px;background:#98c994;border:1.5px solid #555;box-sizing:border-box;box-shadow:2px 4px 5px rgba(0,0,0,0.35);"></div>
<div style="position:absolute;left:591.50px;top:682.5px;font-size:12px;line-height:12px;font-weight:400;color:#2f5f2f;white-space:pre;transform:scaleX(1.0208);transform-origin:0 0;">Toyota Prius M24WHF Black 2006</div>
<div style="position:absolute;left:796.50px;top:682.5px;font-size:12px;line-height:12px;font-weight:400;color:#2f5f2f;white-space:pre;transform:scaleX(0.9725);transform-origin:0 0;">Assigned</div>
<div style="position:absolute;left:907.40px;top:682.5px;font-size:12px;line-height:12px;font-weight:400;color:#2f5f2f;white-space:pre;transform:scaleX(1.0102);transform-origin:0 0;">12-20-2025</div>
<div style="position:absolute;left:1018.20px;top:683.0px;font-size:10.5px;line-height:10.5px;font-weight:400;color:#2f5f2f;white-space:pre;">12-26-2025</div>
<div style="position:absolute;left:1129.60px;top:683.0px;font-size:10.5px;line-height:10.5px;font-weight:400;color:#555555;white-space:pre;transform:scaleX(0.9500);transform-origin:0 0;">$350</div>
<div style="position:absolute;left:1240.50px;top:683.0px;font-size:10.5px;line-height:10.5px;font-weight:400;color:#555555;white-space:pre;transform:scaleX(0.9500);transform-origin:0 0;">$350</div>
<div style="position:absolute;left:1351.80px;top:683.0px;font-size:10.5px;line-height:10.5px;font-weight:400;color:#111111;white-space:pre;transform:scaleX(0.9500);transform-origin:0 0;-webkit-text-stroke:0.3px #111111;">$0</div>
<div style="position:absolute;left:1463.00px;top:683.0px;font-size:10.5px;line-height:10.5px;font-weight:400;color:#555555;white-space:pre;transform:scaleX(0.9500);transform-origin:0 0;">$350</div>
<div style="position:absolute;left:1574.00px;top:683.0px;font-size:10.5px;line-height:10.5px;font-weight:400;color:#555555;white-space:pre;transform:scaleX(0.9500);transform-origin:0 0;">$350</div>
<div style="position:absolute;left:1685.30px;top:683.0px;font-size:10.5px;line-height:10.5px;font-weight:400;color:#111111;white-space:pre;transform:scaleX(0.9500);transform-origin:0 0;-webkit-text-stroke:0.3px #111111;">$0</div>
<div style="position:absolute;left:591.50px;top:718.5px;font-size:12px;line-height:12px;font-weight:400;color:#333333;white-space:pre;transform:scaleX(1.0159);transform-origin:0 0;">Toyota Prius P72WJP Silver 2008</div>
<div style="position:absolute;left:796.50px;top:718.5px;font-size:12px;line-height:12px;font-weight:400;color:#e53935;white-space:pre;transform:scaleX(0.9831);transform-origin:0 0;">Expired</div>
<div style="position:absolute;left:907.40px;top:718.5px;font-size:12px;line-height:12px;font-weight:400;color:#333333;white-space:pre;transform:scaleX(1.0251);transform-origin:0 0;">11-26-2025</div>
<div style="position:absolute;left:1018.20px;top:719.0px;font-size:10.5px;line-height:10.5px;font-weight:400;color:#444444;white-space:pre;">12-02-2025</div>
<div style="position:absolute;left:1129.60px;top:719.0px;font-size:10.5px;line-height:10.5px;font-weight:400;color:#555555;white-space:pre;transform:scaleX(0.9500);transform-origin:0 0;">$350</div>
<div style="position:absolute;left:1240.50px;top:719.0px;font-size:10.5px;line-height:10.5px;font-weight:400;color:#555555;white-space:pre;transform:scaleX(0.9500);transform-origin:0 0;">$350</div>
<div style="position:absolute;left:1351.80px;top:719.0px;font-size:10.5px;line-height:10.5px;font-weight:400;color:#111111;white-space:pre;transform:scaleX(0.9500);transform-origin:0 0;-webkit-text-stroke:0.3px #111111;">$0</div>
<div style="position:absolute;left:1463.00px;top:719.0px;font-size:10.5px;line-height:10.5px;font-weight:400;color:#555555;white-space:pre;transform:scaleX(0.9500);transform-origin:0 0;">$0</div>
<div style="position:absolute;left:1574.00px;top:719.0px;font-size:10.5px;line-height:10.5px;font-weight:400;color:#555555;white-space:pre;transform:scaleX(0.9500);transform-origin:0 0;">$0</div>
<div style="position:absolute;left:1685.30px;top:719.0px;font-size:10.5px;line-height:10.5px;font-weight:400;color:#111111;white-space:pre;transform:scaleX(0.9500);transform-origin:0 0;-webkit-text-stroke:0.3px #111111;">$0</div>
<div style="position:absolute;left:578px;top:1017px;width:1243px;height:6px;background:#e6e6e6;border-radius:3px;"></div>
<div style="position:absolute;left:0px;top:1032px;width:1907px;height:1px;background:#b4b09c;"></div>
<div style="position:absolute;left:604px;top:458px;width:203px;height:30px;background:#ffffd2;border:1px solid #555;box-sizing:border-box;box-shadow:3px 3px 4px rgba(0,0,0,0.45);"></div>
<div style="position:absolute;left:621.40px;top:466px;font-size:14.8px;line-height:14.8px;font-weight:400;color:#111111;white-space:pre;">car assigned to customer</div>
<svg style="position:absolute;left:790px;top:460px" width="60" height="215" viewBox="790 460 60 215"><path d="M806.4 472 L831.6 654" stroke="#ff1010" stroke-width="1.3"/><path d="M828.5 656.6 L840 654.5 L835.3 672.4 Z" fill="rgba(0,0,0,0.18)"/><path d="M826 654.7 L837.8 652.3 L833.5 670.4 Z" fill="#ff0000" stroke="#b00000" stroke-width="0.7" stroke-linejoin="round"/><circle cx="806.4" cy="472" r="4.3" fill="#ff0000" stroke="#c00000" stroke-width="0.6"/></svg>
</body></html>
